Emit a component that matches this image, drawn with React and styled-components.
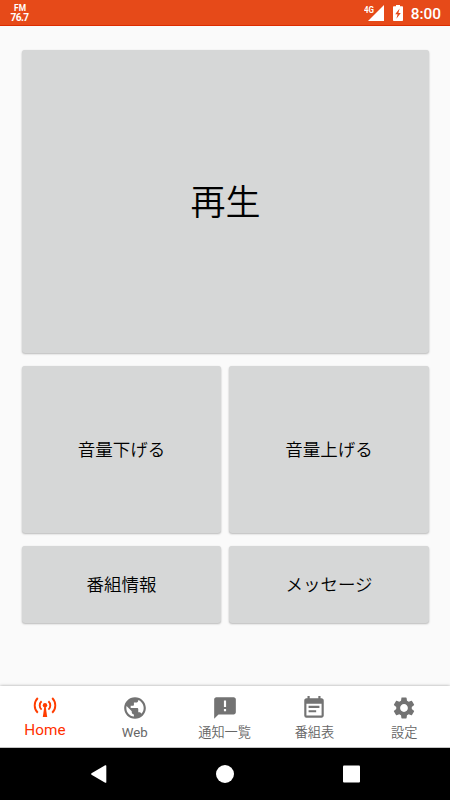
import React, { useState } from 'react';
import styled, { createGlobalStyle } from 'styled-components';
import { MdPublic, MdAnnouncement, MdEventNote, MdSettings } from 'react-icons/md';

const GlobalStyle = createGlobalStyle`
  * {
    box-sizing: border-box;
  }
  body {
    margin: 0;
    font-family: Roboto, 'Noto Sans CJK JP', sans-serif;
  }
`;
const Screen = styled.div`
  display: flex;
  flex-direction: column;
  width: 450px;
  height: 800px;
  background: #fafafa;
  overflow: hidden;
`;
const StatusBar = styled.header`
  display: flex;
  justify-content: space-between;
  flex: none;
  height: 26px;
  padding: 0 9px 0 11px;
  background: #e64a19;
  border-bottom: 1px solid #dd2c00;
  color: white;
`;
const Station = styled.div`
  display: flex;
  flex-direction: column;
  align-items: center;
  width: 17px;
  padding-top: 4px;
  font-weight: 700;
`;
const StationBand = styled.span`
  padding-left: 1px;
  font-size: 8.4px;
  line-height: 9px;
`;
const StationFrequency = styled.span`
  font-size: 10.2px;
  line-height: 10px;
  letter-spacing: -0.6px;
`;
const Indicators = styled.div`
  display: flex;
  align-items: flex-start;
`;
const Clock = styled.span`
  margin-left: 6px;
  padding-top: 5px;
  font-size: 15.4px;
  font-weight: 500;
  line-height: 18px;
`;
const Content = styled.main`
  display: grid;
  flex: 1;
  grid-template-columns: 199px 200px;
  grid-template-rows: 303px 167px 77px;
  gap: 13px 8px;
  padding: 24px 21px 0 22px;
`;
const PadButton = styled.button`
  grid-column: ${props => (props.$wide ? '1 / -1' : 'auto')};
  border: 0;
  border-radius: 3px;
  padding: 0 0 ${props => (props.$wide ? '4px' : '0')};
  background: #d6d7d7;
  box-shadow: 0 1px 2px rgba(0, 0, 0, 0.26), 0 0 1px rgba(0, 0, 0, 0.08);
  color: #000;
  font-family: 'Noto Sans CJK JP', sans-serif;
  font-size: ${props => (props.$wide ? '35px' : '17.5px')};
  font-weight: 350;
  line-height: 1.4;
  cursor: pointer;
`;
const TabBar = styled.nav`
  display: grid;
  flex: none;
  grid-template-columns: repeat(5, 1fr);
  height: 62px;
  padding-right: 0.8px;
  background: white;
  border-bottom: 1px solid #c4c4c4;
  box-shadow: 0 0 3px rgba(0, 0, 0, 0.35);
`;
const Tab = styled.button`
  display: flex;
  flex-direction: column;
  align-items: center;
  border: 0;
  padding: ${props => (props.$active ? '7px' : '9px')} 0 0;
  background: none;
  color: ${props => (props.$active ? '#ff3d00' : '#737373')};
  font-family: inherit;
  cursor: pointer;

  svg {
    flex: none;
    width: 26px;
    height: 26px;
  }
`;
const TabLabel = styled.span`
  margin-top: ${props => (props.$active ? '2px' : '3px')};
  color: ${props => (props.$active ? '#ff3000' : '#666')};
  font-size: ${props => (props.$active ? '15.3px' : '13.2px')};
  font-weight: ${props => (props.$latin ? 400 : 350)};
  line-height: 18px;
  white-space: nowrap;
`;
const SystemBar = styled.footer`
  display: flex;
  justify-content: space-between;
  align-items: center;
  flex: none;
  height: 52px;
  padding: 0 89px;
  background: #000;
`;

function AntennaIcon() {
  return (
    <svg viewBox="0 0 26 26" fill="none" stroke="currentColor" strokeWidth="1.9">
      <circle cx="13" cy="12.2" r="2.2" fill="currentColor" stroke="none" />
      <path d="M12.4 13h1.2L15.2 24h-4.4z" fill="currentColor" stroke="none" />
      <path d="M9.6 8.2a5.6 5.6 0 0 0 0 8.4M16.4 8.2a5.6 5.6 0 0 1 0 8.4" />
      <path d="M5.8 5a10.4 10.4 0 0 0 0 14.8M20.2 5a10.4 10.4 0 0 1 0 14.8" />
    </svg>
  );
}

function SignalIcon() {
  return (
    <svg width="21" height="26" viewBox="0 0 21 26" fill="white">
      <path d="M20 5v16H4z" />
      <text x="0" y="12.5" fontSize="9.5" fontWeight="700" textLength="10" lengthAdjust="spacingAndGlyphs">
        4G
      </text>
    </svg>
  );
}

function BatteryIcon() {
  return (
    <svg width="20" height="26" viewBox="0 0 20 26">
      <path d="M11 5h4v1.2h2.2q.8 0 .8.8v13.2q0 .8-.8.8H8.8q-.8 0-.8-.8V7q0-.8.8-.8H11z" fill="white" />
      <path d="M14.6 8.6l-4.4 5.6h2.4l-1.2 4.6 4.4-5.8h-2.4z" fill="#e64a19" />
    </svg>
  );
}

const buttons = ['再生', '音量下げる', '音量上げる', '番組情報', 'メッセージ'];

const tabs = [
  { label: 'Home', Icon: AntennaIcon, latin: true },
  { label: 'Web', Icon: MdPublic, latin: true },
  { label: '通知一覧', Icon: MdAnnouncement },
  { label: '番組表', Icon: MdEventNote },
  { label: '設定', Icon: MdSettings }
];

function App() {
  const [active, setActive] = useState(0);

  return (
    <Screen>
      <GlobalStyle />
      <StatusBar>
        <Station>
          <StationBand>FM</StationBand>
          <StationFrequency>76.7</StationFrequency>
        </Station>
        <Indicators>
          <SignalIcon />
          <BatteryIcon />
          <Clock>8:00</Clock>
        </Indicators>
      </StatusBar>
      <Content>
        {buttons.map((label, idx) => (
          <PadButton key={label} $wide={idx === 0}>
            {label}
          </PadButton>
        ))}
      </Content>
      <TabBar>
        {tabs.map(({ label, Icon, latin }, idx) => (
          <Tab key={label} $active={idx === active} onClick={() => setActive(idx)}>
            <Icon />
            <TabLabel $active={idx === active} $latin={latin}>
              {label}
            </TabLabel>
          </Tab>
        ))}
      </TabBar>
      <SystemBar>
        <svg width="20" height="20" viewBox="0 0 20 20" fill="white">
          <path d="M16.2 1.3q1.1-.5 1.1.7v16q0 1.2-1.1.7L2.5 10.7q-.9-.7 0-1.4z" />
        </svg>
        <svg width="20" height="20" viewBox="0 0 20 20" fill="white">
          <circle cx="10" cy="10" r="9" />
        </svg>
        <svg width="20" height="20" viewBox="0 0 20 20" fill="white">
          <rect x="2" y="1.5" width="17" height="17" rx="1" />
        </svg>
      </SystemBar>
    </Screen>
  );
}

export default App;
